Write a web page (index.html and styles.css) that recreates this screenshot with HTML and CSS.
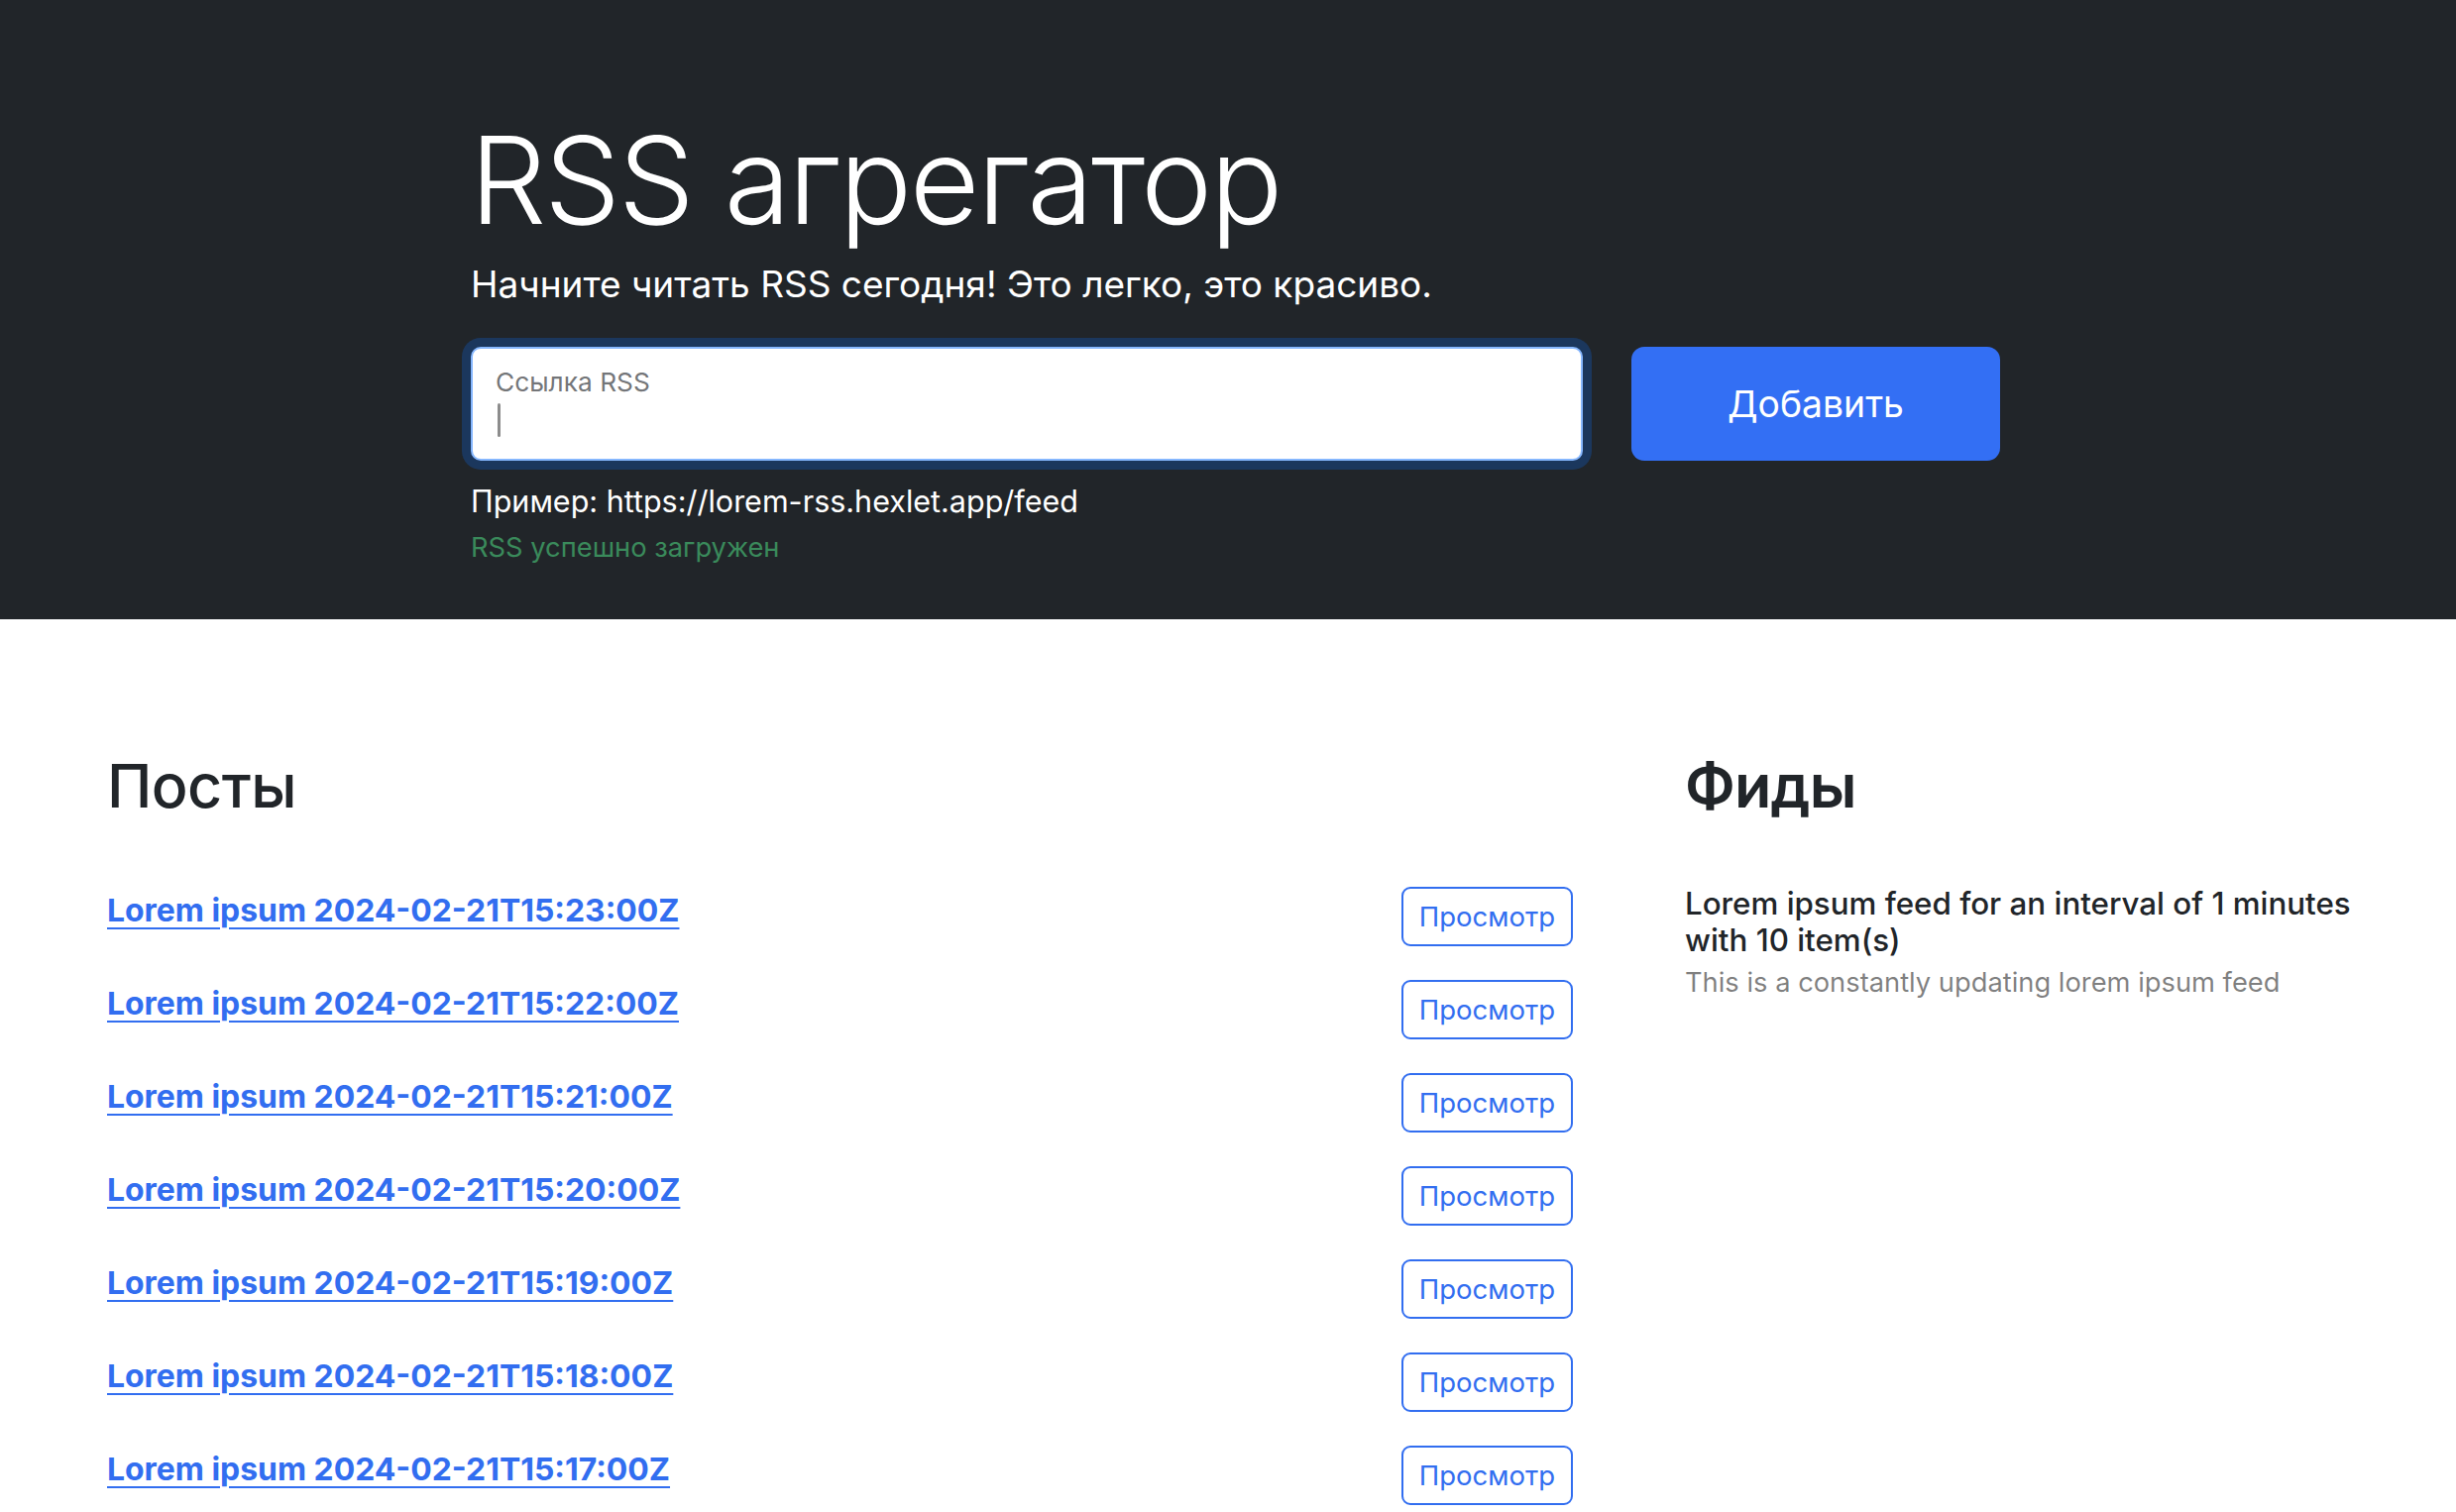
FILE: index.html
```html
<!DOCTYPE html>
<html lang="ru">
<head>
<meta charset="utf-8">
<title>RSS агрегатор</title>
<link rel="stylesheet" href="styles.css">
</head>
<body>
<header class="hero">
  <div class="hero-inner">
    <h1 class="hero-title">RSS агрегатор</h1>
    <p class="hero-lead">Начните читать RSS сегодня! Это легко, это красиво.</p>
    <form class="rss-form">
      <div class="floating">
        <input class="url-input" id="url-input" type="text" aria-label="url" autocomplete="off">
        <label for="url-input" class="floating-label">Ссылка RSS</label>
        <span class="caret"></span>
      </div>
      <button class="btn-add" type="submit">Добавить</button>
    </form>
    <p class="example">Пример: https://lorem-rss.hexlet.app/feed</p>
    <p class="feedback">RSS успешно загружен</p>
  </div>
</header>
<main class="content">
  <section class="posts">
    <h2 class="section-title">Посты</h2>
    <ul class="post-list">
      <li class="post"><a href="#" class="post-link">Lorem ipsum 2024-02-21T15:23:00Z</a><button class="btn-view" type="button">Просмотр</button></li>
      <li class="post"><a href="#" class="post-link">Lorem ipsum 2024-02-21T15:22:00Z</a><button class="btn-view" type="button">Просмотр</button></li>
      <li class="post"><a href="#" class="post-link">Lorem ipsum 2024-02-21T15:21:00Z</a><button class="btn-view" type="button">Просмотр</button></li>
      <li class="post"><a href="#" class="post-link">Lorem ipsum 2024-02-21T15:20:00Z</a><button class="btn-view" type="button">Просмотр</button></li>
      <li class="post"><a href="#" class="post-link">Lorem ipsum 2024-02-21T15:19:00Z</a><button class="btn-view" type="button">Просмотр</button></li>
      <li class="post"><a href="#" class="post-link">Lorem ipsum 2024-02-21T15:18:00Z</a><button class="btn-view" type="button">Просмотр</button></li>
      <li class="post"><a href="#" class="post-link">Lorem ipsum 2024-02-21T15:17:00Z</a><button class="btn-view" type="button">Просмотр</button></li>
    </ul>
  </section>
  <section class="feeds">
    <h2 class="section-title feeds-title">Фиды</h2>
    <ul class="feed-list">
      <li class="feed">
        <h3 class="feed-title">Lorem ipsum feed for an interval of 1 minutes with 10 item(s)</h3>
        <p class="feed-desc">This is a constantly updating lorem ipsum feed</p>
      </li>
    </ul>
  </section>
</main>
</body>
</html>
```
FILE: styles.css
```css
html, body {
  margin: 0;
  padding: 0;
}

body {
  font-family: Inter, "Noto Sans", sans-serif;
  color: #212529;
  background: #fff;
  overflow: hidden;
  height: 1526px;
}

/* ---------- hero ---------- */
.hero {
  background: #212529;
  color: #fff;
  padding: 109px 0 51px;
}

.hero-inner {
  width: 1543px;
  margin-left: 475px;
}

.hero-title {
  margin: 0;
  font-size: 122px;
  font-weight: 300;
  line-height: 1.2;
  letter-spacing: -2.3px;
  margin-left: -1px;
}

.hero-lead {
  margin: 4px 0 35px;
  font-size: 37px;
  font-weight: 400;
  line-height: 1.5;
}

.rss-form {
  display: flex;
  gap: 49px;
}

.floating {
  position: relative;
  flex: 1;
}

.url-input {
  display: block;
  box-sizing: border-box;
  width: 100%;
  height: 115px;
  margin: 0;
  padding: 0 25px;
  border: 2px solid #86b7fe;
  border-radius: 10px;
  background: #fff;
  box-shadow: 0 0 0 9px rgba(13, 110, 253, 0.25);
  outline: none;
  font: inherit;
}

.floating-label {
  position: absolute;
  left: 25px;
  top: 21px;
  font-size: 26.3px;
  line-height: 30px;
  color: rgba(33, 37, 41, 0.65);
}

.caret {
  position: absolute;
  left: 27px;
  top: 57px;
  width: 3px;
  height: 34px;
  border-radius: 2px;
  background: #8c8c8c;
}

.btn-add {
  width: 372px;
  height: 115px;
  border: 0;
  border-radius: 13px;
  background: #336ff4;
  color: #fff;
  font-family: inherit;
  font-size: 37.3px;
  font-weight: 400;
  cursor: pointer;
}

.example {
  margin: 18px 0 0;
  font-size: 30.5px;
  line-height: 1.5;
}

.feedback {
  margin: 4px 0 0;
  font-size: 27.3px;
  line-height: 1.5;
  color: #3a8a5b;
}

/* ---------- content ---------- */
.content {
  display: grid;
  grid-template-columns: 1479px 690px;
  column-gap: 113px;
  padding: 131px 0 0 108px;
}

.section-title {
  margin: 0 0 48px;
  font-size: 61px;
  font-weight: 500;
  line-height: 74.4px;
  letter-spacing: -0.6px;
}

.feeds-title {
  font-weight: 600;
  letter-spacing: -0.8px;
}

.post-list,
.feed-list {
  list-style: none;
  margin: 0;
  padding: 0;
}

.post {
  display: flex;
  justify-content: space-between;
  align-items: flex-start;
  padding: 17px 0;
}

.post-link {
  font-size: 31.9px;
  font-weight: 700;
  line-height: 1.5;
  color: #326ef0;
  text-decoration: underline;
  text-decoration-thickness: 2px;
  text-underline-offset: 6px;
}

.btn-view {
  box-sizing: border-box;
  height: 60px;
  padding: 9px 16px;
  border: 2px solid #326ef0;
  border-radius: 9px;
  background: transparent;
  color: #326ef0;
  font-family: inherit;
  font-size: 27.5px;
  line-height: 38px;
  cursor: pointer;
}

.feed {
  padding: 16px 0;
}

.feed-title {
  margin: 0;
  font-size: 31.3px;
  font-weight: 500;
  line-height: 37px;
}

.feed-desc {
  margin: 5px 0 0;
  font-size: 27.3px;
  line-height: 38px;
  color: rgba(0, 0, 0, 0.5);
}
```
